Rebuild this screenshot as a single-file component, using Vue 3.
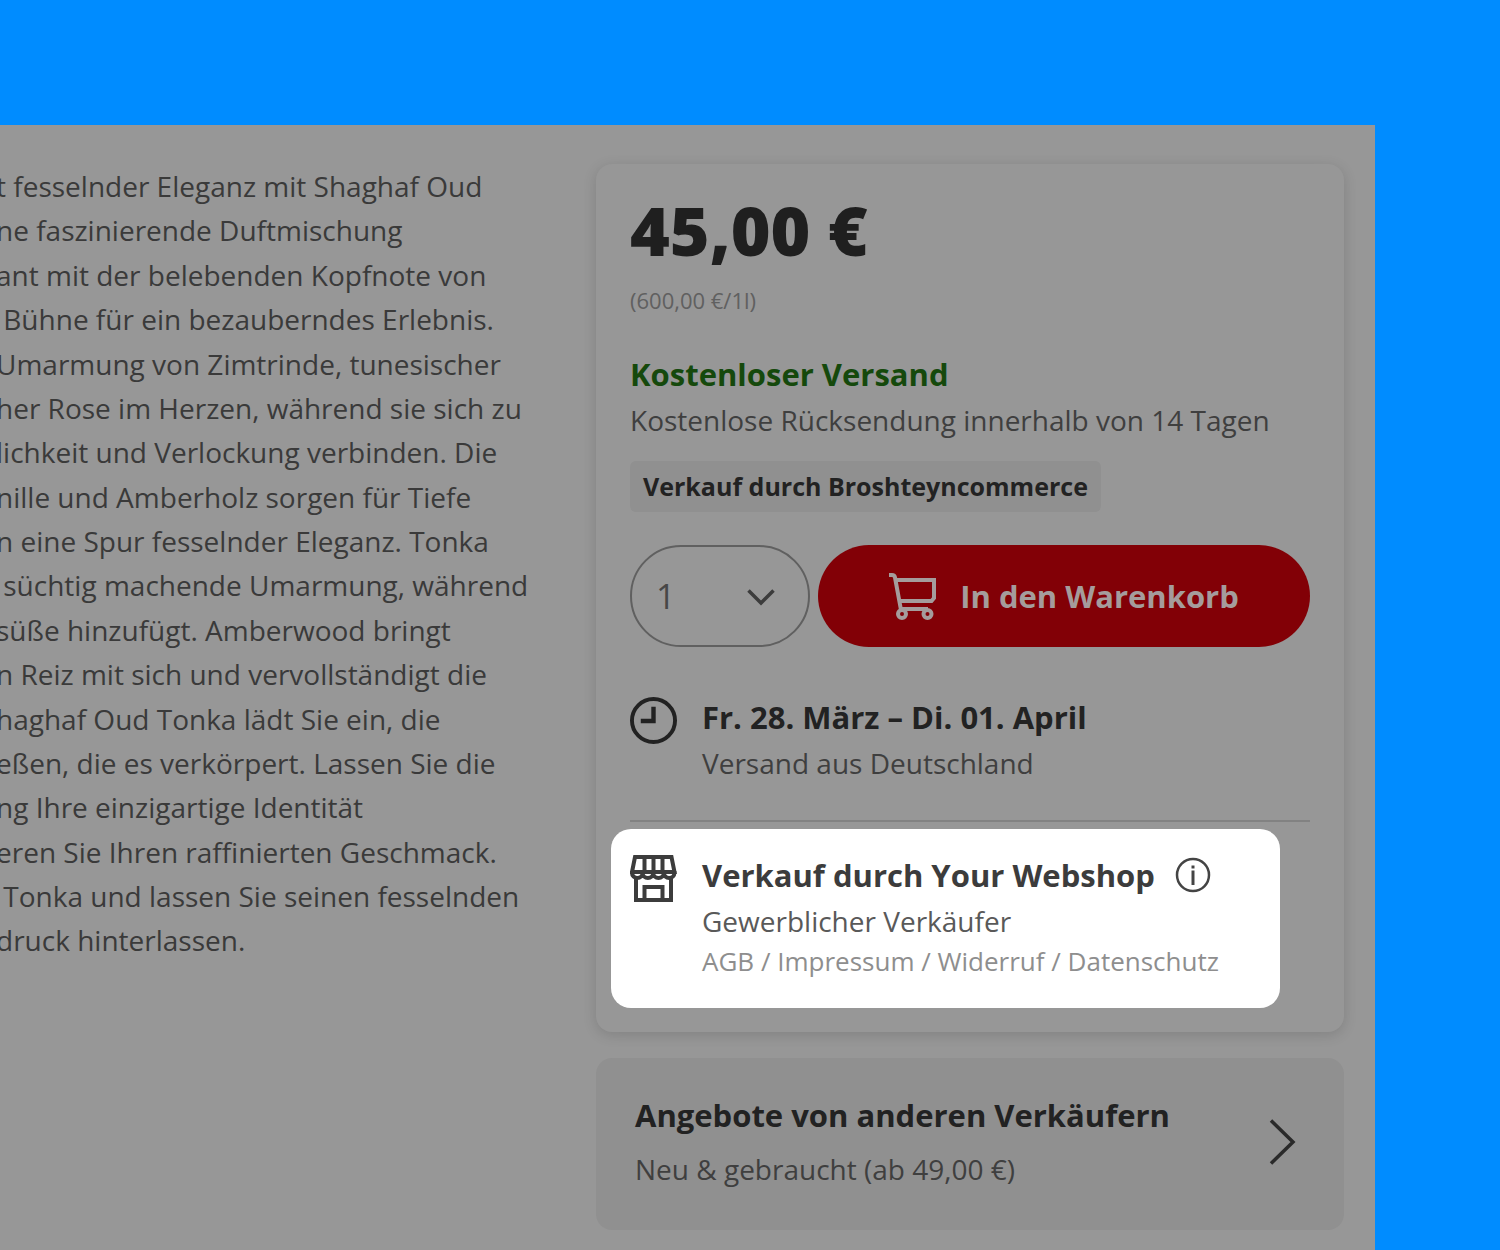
<template>
  <div class="page">
    <main class="panel">
      <section class="description" aria-label="Beschreibung">
        <p v-for="(line, idx) in lines" :key="idx">{{ line }}</p>
      </section>

      <aside class="sidebar">
        <section class="card">
          <p class="price">45,00 €</p>
          <p class="unit-price">(600,00 €/1l)</p>

          <div class="stack shipping">
            <p class="title free">Kostenloser Versand</p>
            <p class="text">Kostenlose Rücksendung innerhalb von 14 Tagen</p>
          </div>

          <p class="badge">Verkauf durch Broshteyncommerce</p>

          <form class="buy" @submit.prevent>
            <div class="quantity">
              <select v-model="quantity" aria-label="Menge">
                <option v-for="n in 5" :key="n" :value="n">{{ n }}</option>
              </select>
              <svg class="quantity-arrow" viewBox="0 0 28 18" aria-hidden="true">
                <path d="M1.5 2.5 14 15 26.5 2.5" fill="none" stroke="currentColor" stroke-width="3.5" />
              </svg>
            </div>
            <button type="submit" class="cart-button">
              <svg class="icon" viewBox="0 0 47 47" fill="none" stroke="currentColor" stroke-width="4" aria-hidden="true">
                <path d="M0 2H3Q5.500 2 6 4.500L12 37" />
                <path d="M7 7H45V25L42.500 28H11" />
                <path d="M12 36H39" />
                <circle cx="13" cy="41" r="4" />
                <circle cx="38.500" cy="41" r="4" />
              </svg>
              In den Warenkorb
            </button>
          </form>

          <div class="info-row delivery">
            <svg class="icon" viewBox="0 0 48 48" fill="none" stroke="currentColor" stroke-width="4" aria-hidden="true">
              <circle cx="24" cy="24" r="22" />
              <path d="M24 10V24.5H11" stroke-width="4.5" />
            </svg>
            <div class="stack">
              <p class="title">Fr. 28. März – Di. 01. April</p>
              <p class="text">Versand aus Deutschland</p>
            </div>
          </div>

          <hr class="divider" />

          <div class="info-row seller">
            <svg class="icon" viewBox="0 0 47 47" fill="none" stroke="currentColor" stroke-width="4" aria-hidden="true">
              <path d="M5 2H41.500L44.500 17H2Z" />
              <path d="M14.500 2V17M23.500 2V17M32.500 2V17" />
              <path d="M2 16v2a5.300 5 0 0 0 10.600 0 5.300 5 0 0 0 10.600 0 5.300 5 0 0 0 10.600 0 5.300 5 0 0 0 10.600 0v-2" />
              <path d="M6 22V45H41V22" />
              <path d="M14.500 45V32H32.500V45" />
            </svg>
            <div class="stack">
              <div class="seller-name">
                <h2 class="title">Verkauf durch Your Webshop</h2>
                <button type="button" class="info-button" aria-label="Informationen zum Verkäufer">
                  <svg viewBox="0 0 36 36" fill="none" stroke="currentColor" stroke-width="2.5" aria-hidden="true">
                    <circle cx="18" cy="18" r="16" />
                    <path d="M18 13.500V28" stroke-width="3" />
                    <path d="M18 8.500V11.500" stroke-width="3" />
                  </svg>
                </button>
              </div>
              <p class="text">Gewerblicher Verkäufer</p>
              <nav class="legal">
                <template v-for="(item, idx) in legalLinks" :key="item">
                  <span v-if="idx > 0"> / </span><a href="#">{{ item }}</a>
                </template>
              </nav>
            </div>
          </div>
        </section>

        <a href="#" class="offers">
          <span class="offers-text">
            <span class="title">Angebote von anderen Verkäufern</span>
            <span class="text">Neu &amp; gebraucht (ab 49,00 €)</span>
          </span>
          <svg class="offers-arrow" viewBox="0 0 28 48" aria-hidden="true">
            <path d="M2 2.5 24 24 2 45.5" fill="none" stroke="currentColor" stroke-width="3.5" />
          </svg>
        </a>
      </aside>
    </main>
  </div>
</template>

<script setup>
import { ref } from 'vue'

const quantity = ref(1)
const legalLinks = ['AGB', 'Impressum', 'Widerruf', 'Datenschutz']

// lines run out of the panel on the left, a leading space means the cut falls between words
const lines = [
  't fesselnder Eleganz mit Shaghaf Oud',
  'ne faszinierende Duftmischung',
  'ant mit der belebenden Kopfnote von',
  ' Bühne für ein bezauberndes Erlebnis.',
  'Umarmung von Zimtrinde, tunesischer',
  'her Rose im Herzen, während sie sich zu',
  'lichkeit und Verlockung verbinden. Die',
  'nille und Amberholz sorgen für Tiefe',
  'n eine Spur fesselnder Eleganz. Tonka',
  ' süchtig machende Umarmung, während',
  'süße hinzufügt. Amberwood bringt',
  'n Reiz mit sich und vervollständigt die',
  'haghaf Oud Tonka lädt Sie ein, die',
  'eßen, die es verkörpert. Lassen Sie die',
  'ng Ihre einzigartige Identität',
  'eren Sie Ihren raffinierten Geschmack.',
  ' Tonka und lassen Sie seinen fesselnden',
  'druck hinterlassen.'
]
</script>

<style>
body { margin:0; }
</style>

<style scoped>
.page { min-height:100vh; box-sizing:border-box; display:flex; padding:125px 125px 0 0; overflow:hidden; background:#008cff; font-family:"Open Sans", "Noto Sans", sans-serif; color:#222; }
.panel { flex:1; min-width:0; display:grid; grid-template-columns:minmax(0, 1fr) minmax(0, 748px); align-items:start; box-sizing:border-box; padding:39px 31px 20px 0; background:#979797; }
p, h2 { margin:0; }

.description { margin-left:-4px; overflow:hidden; font-size:28px; line-height:1.585; color:#3a3a3a; white-space:pre; }

.sidebar { display:flex; flex-direction:column; gap:26px; }
.card { padding:33px 34px 24px 34px; border-radius:16px; background:#979797; box-shadow:0 3px 14px rgba(0,0,0,0.14); }
.price { font-family:"Noto Sans", "Open Sans", sans-serif; font-size:68px; line-height:66px; font-weight:900; color:#1f1f1f; }
.unit-price { margin-top:23px; font-size:22px; line-height:28px; color:#606060; }

.title { font-size:31px; line-height:44px; font-weight:700; }
.text { font-size:28px; line-height:44px; color:#3f3f3f; }
.stack { display:flex; flex-direction:column; gap:2px; min-width:0; }
.shipping { margin-top:38px; }
.free { color:#15490c; }
.badge { width:fit-content; margin-top:19px; padding:0 13px; border-radius:6px; background:#909090; font-size:25px; line-height:51px; font-weight:700; }

.buy { display:flex; gap:8px; margin-top:33px; }
.quantity { position:relative; width:180px; flex-shrink:0; }
.quantity select { appearance:none; width:100%; height:102px; padding:0 0 0 24px; border:2px solid #606060; border-radius:51px; background:transparent; font:inherit; font-size:34px; color:#474747; }
.quantity-arrow { position:absolute; right:35px; top:43px; width:28px; height:18px; color:#3c3c3c; pointer-events:none; }
.cart-button { flex:1; display:flex; align-items:center; justify-content:center; gap:24px; height:102px; padding:0; border:0; border-radius:51px; background:#820006; font:inherit; font-size:31px; font-weight:700; color:#a59c9c; cursor:pointer; }

.icon { width:47px; height:47px; flex-shrink:0; }
.info-row { display:flex; gap:25px; }
.info-row > .icon { margin-top:2px; }
.delivery { margin-top:48px; }
.divider { height:2px; margin:35px 0 7px; border:0; background:#828282; }
.seller { margin:0 30px 0 -19px; padding:24px 19px 31px; border-radius:20px; background:#fff; color:#3c3c3c; }
.seller .text { color:#595959; }
.seller-name { display:flex; align-items:center; gap:20px; }
.info-button { display:flex; padding:0; border:0; background:none; color:#444; cursor:pointer; }
.info-button svg { width:36px; height:36px; }
.legal { font-size:26px; line-height:32px; color:#8e8e8e; }
.legal span { white-space:pre; }
.legal a { color:inherit; text-decoration:none; }

.offers { display:flex; align-items:center; justify-content:space-between; padding:35px 47px 39px 39px; border-radius:16px; background:#909090; color:#222; text-decoration:none; }
.offers-text { display:flex; flex-direction:column; gap:10px; }
.offers-arrow { width:28px; height:48px; color:#2a2a2a; }
</style>
